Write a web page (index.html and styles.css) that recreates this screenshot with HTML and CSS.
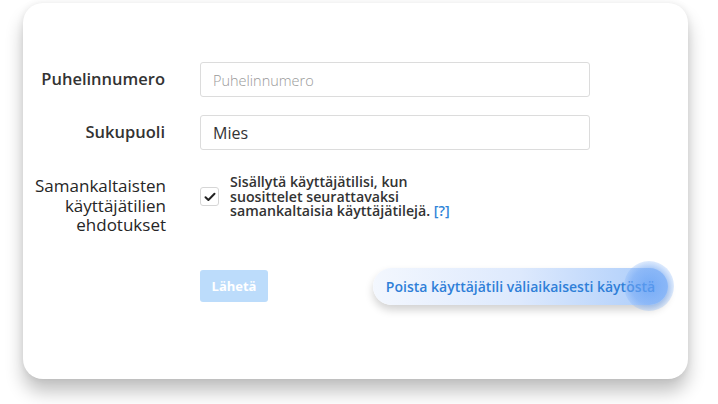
FILE: index.html
```html
<!DOCTYPE html>
<html lang="fi">
<head>
    <meta charset="UTF-8">
    <meta name="viewport" content="width=device-width, initial-scale=1.0">
    <title>Asetukset</title>
    <link rel="stylesheet" href="styles.css">
</head>
<body>
    <div class="card">
        <form class="settings">
            <label class="field-label" for="phone">Puhelinnumero</label>
            <input class="text-input" id="phone" type="text" placeholder="Puhelinnumero">

            <label class="field-label" for="gender">Sukupuoli</label>
            <input class="text-input" id="gender" type="text" value="Mies">

            <div class="field-label plain">Samankaltaisten käyttäjätilien ehdotukset</div>
            <div class="check-row">
                <span class="checkbox">
                    <svg width="12" height="10" viewBox="0 0 12 10"><path d="M1.5 5.2 L4.4 8 L10.5 1.8" fill="none" stroke="#222" stroke-width="2" stroke-linecap="round" stroke-linejoin="round"/></svg>
                </span>
                <span class="check-text">Sisällytä käyttäjätilisi, kun suosittelet seurattavaksi samankaltaisia käyttäjätilejä. <a href="#" class="help">[?]</a></span>
            </div>

            <div></div>
            <div class="actions">
                <button type="button" class="submit" disabled>Lähetä</button>
                <button type="button" class="deactivate">Poista käyttäjätili väliaikaisesti käytöstä<span class="glow"></span></button>
            </div>
        </form>
    </div>
</body>
</html>
```

FILE: styles.css
```css
html, body {
    background-color: #fff;
}
body {
    margin: 0;
    padding: 3px 0 25px 23px;
    font-family: "Open Sans", "Noto Sans", sans-serif;
    color: #333;
}
.card {
    width: 665px;
    height: 376px;
    background-color: #fff;
    border-radius: 20px;
    box-shadow: 0 13px 18px rgba(0, 0, 0, 0.24), 0 0 7px rgba(0, 0, 0, 0.08);
    box-sizing: border-box;
    padding: 59px 0 0 10px;
}
.settings {
    display: grid;
    grid-template-columns: 132px 390px;
    column-gap: 35px;
    row-gap: 18px;
}
.field-label {
    text-align: right;
    font-size: 16.5px;
    font-weight: 600;
    color: #333;
    align-self: center;
    margin-top: -3px;
}
.field-label.plain {
    font-size: 17px;
    font-weight: 400;
    line-height: 19.5px;
    align-self: start;
    margin-top: 8px;
    margin-right: -1px;
    color: #262626;
}
.text-input {
    height: 35px;
    box-sizing: border-box;
    border: 1px solid #dcdcdc;
    border-radius: 3px;
    padding: 0 12px;
    font-family: inherit;
    font-size: 16px;
    color: #333;
    outline: none;
}
.text-input::placeholder {
    color: #999;
    font-size: 14.5px;
    font-weight: 300;
}
.check-row {
    display: flex;
    align-items: center;
    gap: 11px;
    margin-top: 7px;
    align-self: start;
}
.checkbox {
    width: 17px;
    height: 17px;
    border: 1px solid #d6d6d6;
    border-radius: 3px;
    display: flex;
    align-items: center;
    justify-content: center;
    flex-shrink: 0;
}
.check-text {
    font-size: 14.2px;
    font-weight: 600;
    line-height: 14.5px;
    color: #333;
    width: 245px;
}
.help {
    color: #2f84d8;
    text-decoration: none;
}
.actions {
    display: flex;
    align-items: center;
    justify-content: space-between;
    margin-top: 15px;
    width: 468px;
}
.submit {
    width: 68px;
    height: 32px;
    border: none;
    border-radius: 3px;
    background-color: #bcdcfb;
    color: #fff;
    font-family: inherit;
    font-size: 13px;
    font-weight: 700;
}
.deactivate {
    position: relative;
    height: 37px;
    width: 295px;
    border: none;
    border-radius: 19px;
    background: linear-gradient(90deg, #f3f7fe 0%, #dde9fd 50%, #a9cbfa 100%);
    box-shadow: 0 5px 8px rgba(0, 0, 0, 0.18);
    color: #2f7fd8;
    font-family: inherit;
    font-size: 14px;
    font-weight: 600;
    padding: 0;
    text-align: center;
}
.glow {
    position: absolute;
    right: -6px;
    top: -7px;
    width: 50px;
    height: 50px;
    border-radius: 50%;
    background: radial-gradient(circle, rgba(100, 160, 245, 0.75) 0%, rgba(110, 165, 245, 0.55) 50%, rgba(140, 185, 250, 0.2) 75%, rgba(160, 200, 250, 0) 100%);
}
```
